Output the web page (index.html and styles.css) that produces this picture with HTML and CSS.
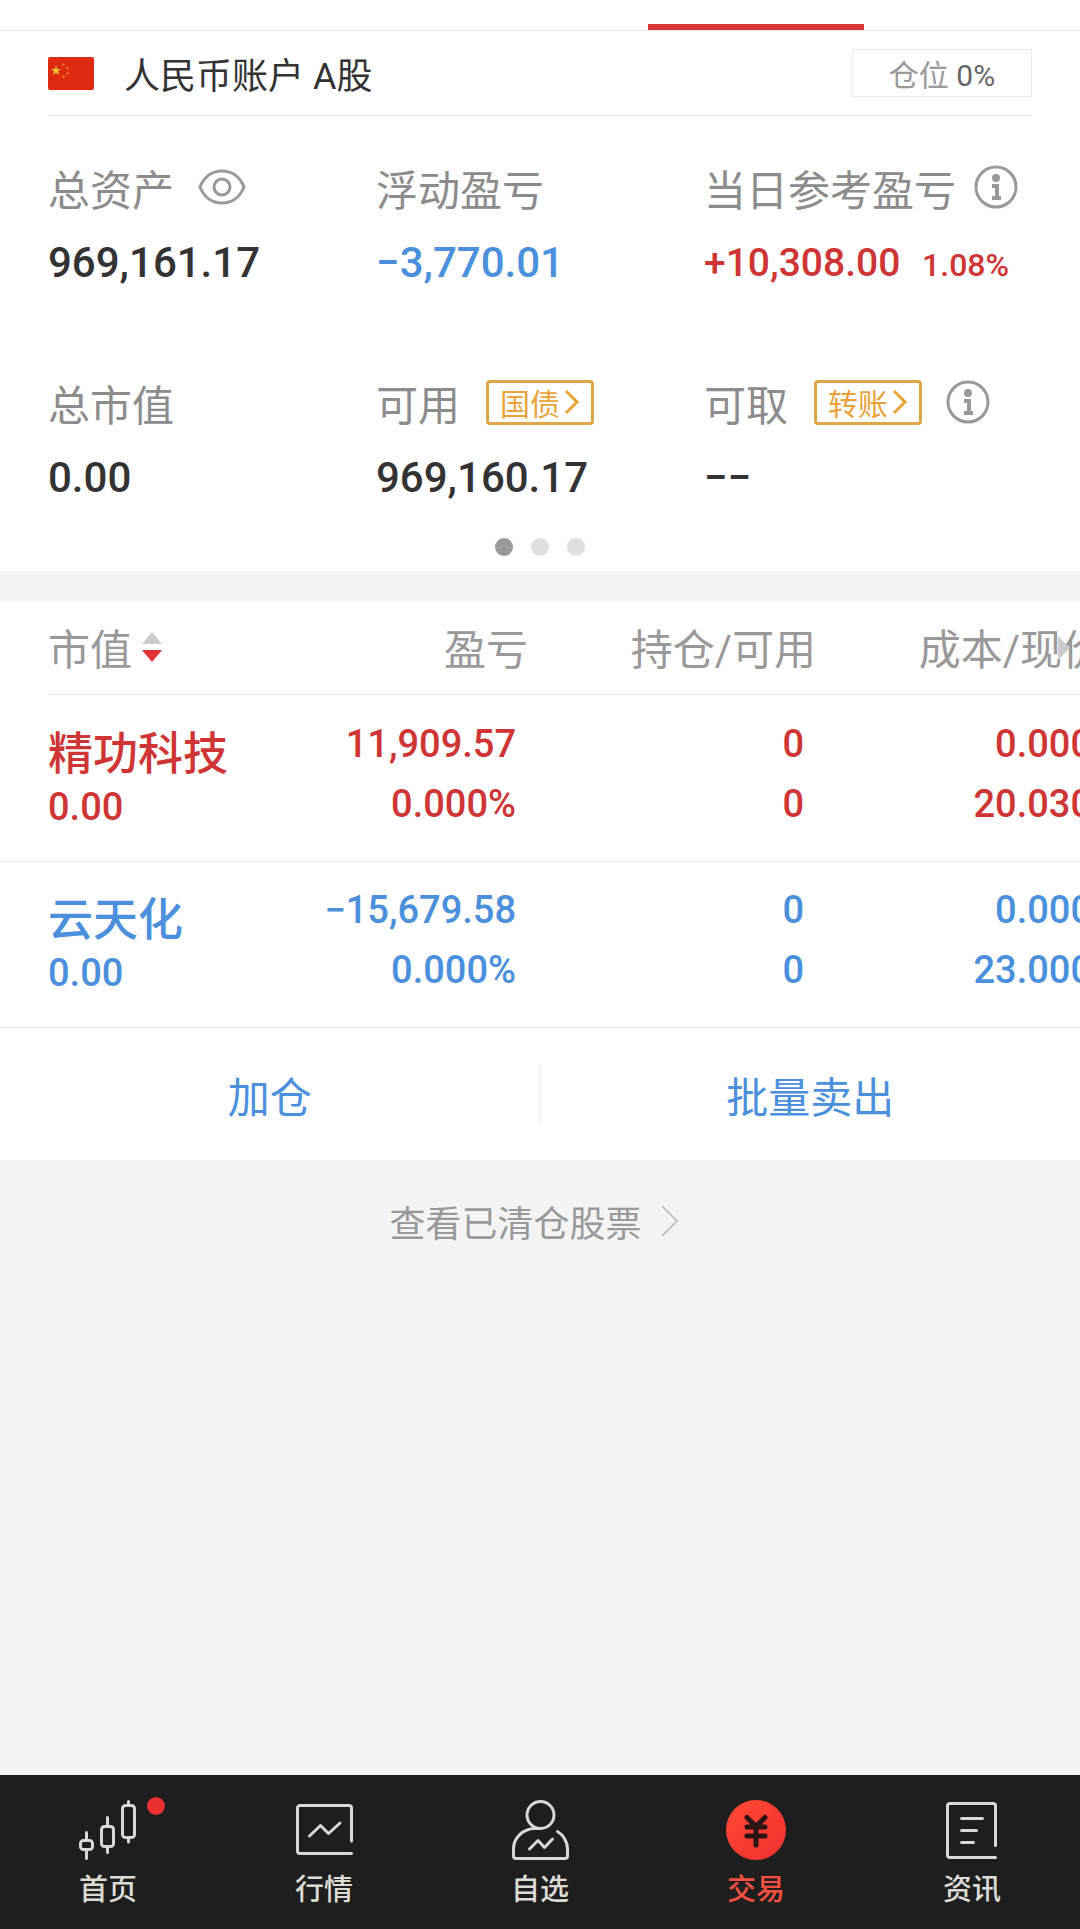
FILE: index.html
```html
<!DOCTYPE html>
<html lang="zh-CN">
<head>
  <meta charset="UTF-8">
  <meta name="viewport" content="width=device-width, initial-scale=1">
  <title>交易</title>
  <link rel="stylesheet" href="styles.css">
</head>
<body>

<div class="top-tabs">
  <span></span>
  <span></span>
  <span></span>
  <span class="active"></span>
  <span></span>
</div>

<section class="account">
  <div class="account-head">
    <svg class="flag" viewBox="0 0 46 33">
      <rect width="46" height="33" rx="2" fill="#df2a12"/>
      <path fill="#fbc02d" d="M8 8.500l1.300 3.400 3.700.1-2.900 2.200 1 3.500L8 15.700l-3.100 2 1-3.500L3 12l3.700-.1z"/>
      <g fill="#f0642a">
        <circle cx="15.500" cy="7.500" r="1.500"/>
        <circle cx="19.500" cy="11" r="1.500"/>
        <circle cx="19.500" cy="16" r="1.500"/>
        <circle cx="15.500" cy="19.500" r="1.500"/>
      </g>
    </svg>
    <h1>人民币账户 A股</h1>
    <button type="button" class="position-btn">仓位 <b>0%</b></button>
  </div>

  <div class="summary">
    <div class="item">
      <div class="label">总资产
        <svg class="eye" viewBox="0 0 48 36" fill="none" stroke="#999" stroke-width="3">
          <path d="M2 18C6 8 14 2 24 2s18 6 22 16c-4 10-12 16-22 16S6 28 2 18z"/>
          <circle cx="24" cy="18" r="8"/>
        </svg>
      </div>
      <div class="value">969,161.17</div>
    </div>
    <div class="item">
      <div class="label">浮动盈亏</div>
      <div class="value down">−3,770.01</div>
    </div>
    <div class="item">
      <div class="label">当日参考盈亏
        <svg class="info" viewBox="0 0 44 44">
          <circle cx="22" cy="22" r="20" fill="none" stroke="#999" stroke-width="3"/>
          <circle cx="22" cy="13" r="4" fill="#999"/>
          <path d="M18 21h5v12M18 33h9" fill="none" stroke="#999" stroke-width="4"/>
        </svg>
      </div>
      <div class="value today up">+10,308.00 <small>1.08%</small></div>
    </div>
    <div class="item">
      <div class="label">总市值</div>
      <div class="value">0.00</div>
    </div>
    <div class="item">
      <div class="label">可用
        <a href="#" class="badge">国债<svg viewBox="0 0 16 26"><path d="M2 2l11 11L2 24"/></svg></a>
      </div>
      <div class="value">969,160.17</div>
    </div>
    <div class="item">
      <div class="label">可取
        <a href="#" class="badge">转账<svg viewBox="0 0 16 26"><path d="M2 2l11 11L2 24"/></svg></a>
        <svg class="info" viewBox="0 0 44 44">
          <circle cx="22" cy="22" r="20" fill="none" stroke="#999" stroke-width="3"/>
          <circle cx="22" cy="13" r="4" fill="#999"/>
          <path d="M18 21h5v12M18 33h9" fill="none" stroke="#999" stroke-width="4"/>
        </svg>
      </div>
      <div class="value">−−</div>
    </div>
  </div>

  <div class="dots"><i class="on"></i><i></i><i></i></div>
</section>

<section class="holdings">
  <div class="table-wrap">
    <table>
      <thead>
        <tr>
          <th><div><button type="button" class="sort">市值
            <svg viewBox="0 0 20 30"><path d="M10 0l10 12H0z" fill="#ccc"/><path d="M10 30L0 18h20z" fill="#e03238"/></svg>
          </button></div></th>
          <th><div>盈亏</div></th>
          <th><div>持仓/可用</div></th>
          <th><div>成本/现价</div></th>
        </tr>
      </thead>
      <tbody>
        <tr class="up">
          <td><span class="name">精功科技</span><span class="amount">0.00</span></td>
          <td><span>11,909.57</span><span>0.000%</span></td>
          <td><span>0</span><span>0</span></td>
          <td><span>0.000</span><span>20.030</span></td>
        </tr>
        <tr class="down">
          <td><span class="name">云天化</span><span class="amount">0.00</span></td>
          <td><span>−15,679.58</span><span>0.000%</span></td>
          <td><span>0</span><span>0</span></td>
          <td><span>0.000</span><span>23.000</span></td>
        </tr>
      </tbody>
    </table>
    <svg class="more" viewBox="0 0 12 24"><path d="M0 0l12 12L0 24z" fill="#ccc"/></svg>
  </div>

  <div class="actions">
    <button type="button">加仓</button>
    <button type="button">批量卖出</button>
  </div>
</section>

<a href="#" class="cleared">查看已清仓股票
  <svg viewBox="0 0 18 32"><path d="M1 1l15 15L1 31" fill="none" stroke="#c4c4c4" stroke-width="2"/></svg>
</a>

<nav class="tabbar">
  <a href="#">
    <svg viewBox="0 0 60 60">
      <rect x="2.500" y="40.500" width="12" height="9" rx="3"/>
      <path d="M8.500 32.500v8M8.500 50v8.500"/>
      <rect x="23.500" y="26.500" width="12" height="20" rx="3"/>
      <path d="M29.500 17.500v8M29.500 47v5.500"/>
      <rect x="44.500" y="5.500" width="12" height="32" rx="3"/>
      <path d="M50.500 1.500v4M50.500 38v4"/>
    </svg>
    <i class="new"></i>
    首页
  </a>
  <a href="#">
    <svg viewBox="0 0 60 60">
      <path d="M57.500 41V8a2.500 2.500 0 0 0-2.500-2.500H6A2.500 2.500 0 0 0 3.500 8v43A2.500 2.500 0 0 0 6 53.500h51.500"/>
      <path d="M15.500 36L26.500 25.500l8 8L46 23"/>
    </svg>
    行情
  </a>
  <a href="#">
    <svg viewBox="0 0 60 60">
      <circle cx="30.500" cy="15" r="13.500"/>
      <path d="M30 28.500h-5C13 28.500 3.500 38 3.500 49v7a2.500 2.500 0 0 0 2.500 2.500h49a2.500 2.500 0 0 0 2.500-2.500v-7c0-7-4-14-10-17.500"/>
      <path d="M19.500 49L28 40.500l6.500 7L42.500 39"/>
    </svg>
    自选
  </a>
  <a href="#" class="active">
    <svg viewBox="0 0 60 60">
      <defs>
        <linearGradient id="coin" x1="0" y1="0" x2="1" y2="1">
          <stop offset="0" stop-color="#ff4a32"/>
          <stop offset="1" stop-color="#ee2f30"/>
        </linearGradient>
      </defs>
      <circle cx="30" cy="30" r="30" fill="url(#coin)" stroke="none"/>
      <path d="M21 17.500l9 9 9-9M21 27h18M21 36h18M30 27v18" stroke="#2a1414" stroke-width="5"/>
    </svg>
    交易
  </a>
  <a href="#">
    <svg viewBox="0 0 60 60">
      <path d="M53.500 45.500V6A2.500 2.500 0 0 0 51 3.500H8A2.500 2.500 0 0 0 5.500 6v49A2.500 2.500 0 0 0 8 57.500h45.500"/>
      <path d="M19.500 18.500h21M19.500 30.500h15M19.500 42.500h12"/>
    </svg>
    资讯
  </a>
</nav>

</body>
</html>
```

FILE: styles.css
```css
* {
  box-sizing: border-box;
}
body {
  margin: 0;
  min-height: 100vh;
  display: flex;
  flex-direction: column;
  background: #f4f4f4;
  color: #333;
  font-family: Roboto, "Noto Sans CJK SC", sans-serif;
}
button {
  border: none;
  padding: 0;
  background: none;
  color: inherit;
  font: inherit;
  cursor: pointer;
}
a {
  color: inherit;
  text-decoration: none;
}
.up {
  color: #cf3535;
}
.down {
  color: #4a90dc;
}

/* top tabs */
.top-tabs {
  display: flex;
  height: 31px;
  background: #fefefe;
  border-bottom: 1px solid #eaeaea;
}
.top-tabs span {
  flex: 1;
}
.top-tabs .active {
  border-bottom: 6px solid #d63636;
}

/* account */
.account {
  background: #fefefe;
  padding: 0 48px 15px;
}
.account-head {
  display: flex;
  align-items: center;
  height: 85px;
  border-bottom: 1px solid #eaeaea;
}
.flag {
  width: 46px;
  height: 33px;
}
h1 {
  margin: 0 auto 0 30px;
  font-size: 36px;
  font-weight: 400;
}
.position-btn {
  width: 180px;
  height: 48px;
  border: 1px solid #eaeaea;
  color: #999;
  font-size: 30px;
}
.position-btn b {
  color: #666;
  font-weight: 400;
}
.summary {
  display: grid;
  grid-template-columns: repeat(3, 1fr);
  row-gap: 85px;
  padding-top: 47px;
}
.label {
  display: flex;
  align-items: center;
  height: 48px;
  color: #8c8c8c;
  font-size: 42px;
  white-space: nowrap;
}
.value {
  margin-top: 24px;
  font-size: 42px;
  font-weight: 500;
  line-height: 56px;
  white-space: nowrap;
}
.today {
  font-size: 39px;
}
.today small {
  margin-left: 12px;
  font-size: 32px;
}
.eye {
  width: 48px;
  height: 36px;
  margin-left: 24px;
}
.info {
  width: 44px;
  height: 44px;
  margin-left: 18px;
}
.badge {
  display: flex;
  align-items: center;
  justify-content: center;
  width: 108px;
  height: 45px;
  margin-left: 26px;
  border: 3px solid #dfa546;
  border-radius: 4px;
  color: #e9a33a;
  font-size: 30px;
}
.badge + .info {
  margin-left: 24px;
}
.badge svg {
  width: 16px;
  height: 26px;
  margin-left: 4px;
  fill: none;
  stroke: #e9a33a;
  stroke-width: 3;
}
.dots {
  display: flex;
  justify-content: center;
  gap: 18px;
  margin-top: 32px;
}
.dots i {
  width: 18px;
  height: 18px;
  border-radius: 50%;
  background: #dfdfdf;
}
.dots .on {
  background: #999;
}

/* holdings */
.holdings {
  margin-top: 30px;
  background: #fefefe;
}
.table-wrap {
  position: relative;
  overflow: hidden;
}
table {
  width: calc(100% + 24px);
  table-layout: fixed;
  border-collapse: collapse;
}
th {
  padding: 0;
  color: #999;
  font-size: 42px;
  font-weight: 400;
  text-align: right;
  white-space: nowrap;
}
th div {
  height: 94px;
  padding-top: 6px;
  line-height: 87px;
  border-bottom: 1px solid #eaeaea;
}
th:first-child {
  width: 240px;
  padding-left: 48px;
  text-align: left;
}
.sort {
  display: flex;
  align-items: center;
  gap: 10px;
}
.sort svg {
  width: 20px;
  height: 30px;
  margin-bottom: 8px;
}
.more {
  position: absolute;
  top: 35px;
  right: 10px;
  width: 12px;
  height: 24px;
}
td {
  height: 166px;
  padding: 0 12px 8px 0;
  border-bottom: 1px solid #eaeaea;
  font-size: 38px;
  font-weight: 500;
  text-align: right;
  white-space: nowrap;
}
td span {
  display: block;
  line-height: 60px;
}
td:first-child {
  padding: 0 0 0 48px;
  text-align: left;
}
td .name {
  font-size: 45px;
  line-height: 58px;
}
td .amount {
  line-height: 46px;
}
.actions {
  display: flex;
  align-items: center;
  height: 132px;
}
.actions button {
  flex: 1;
  height: 60px;
  color: #4a90dc;
  font-size: 42px;
}
.actions button + button {
  border-left: 1px solid #eaeaea;
}

.cleared {
  display: flex;
  align-items: center;
  justify-content: center;
  height: 122px;
  padding-right: 12px;
  color: #999;
  font-size: 36px;
}
.cleared svg {
  width: 18px;
  height: 32px;
  margin-left: 19px;
}

/* bottom bar */
.tabbar {
  display: flex;
  margin-top: auto;
  padding: 25px 0 19px;
  background: #1e1e1e;
}
.tabbar a {
  position: relative;
  flex: 1;
  display: flex;
  flex-direction: column;
  align-items: center;
  gap: 10px;
  color: #dcdcd4;
  font-size: 29px;
  font-weight: 500;
  line-height: 40px;
}
.tabbar svg {
  width: 60px;
  height: 60px;
  fill: none;
  stroke: #d8d8d8;
  stroke-width: 3;
  stroke-linecap: round;
  stroke-linejoin: round;
}
.tabbar .active {
  color: #f4503f;
}
.new {
  position: absolute;
  top: -3px;
  left: calc(50% + 39px);
  width: 18px;
  height: 18px;
  border-radius: 50%;
  background: #e83030;
}
```
